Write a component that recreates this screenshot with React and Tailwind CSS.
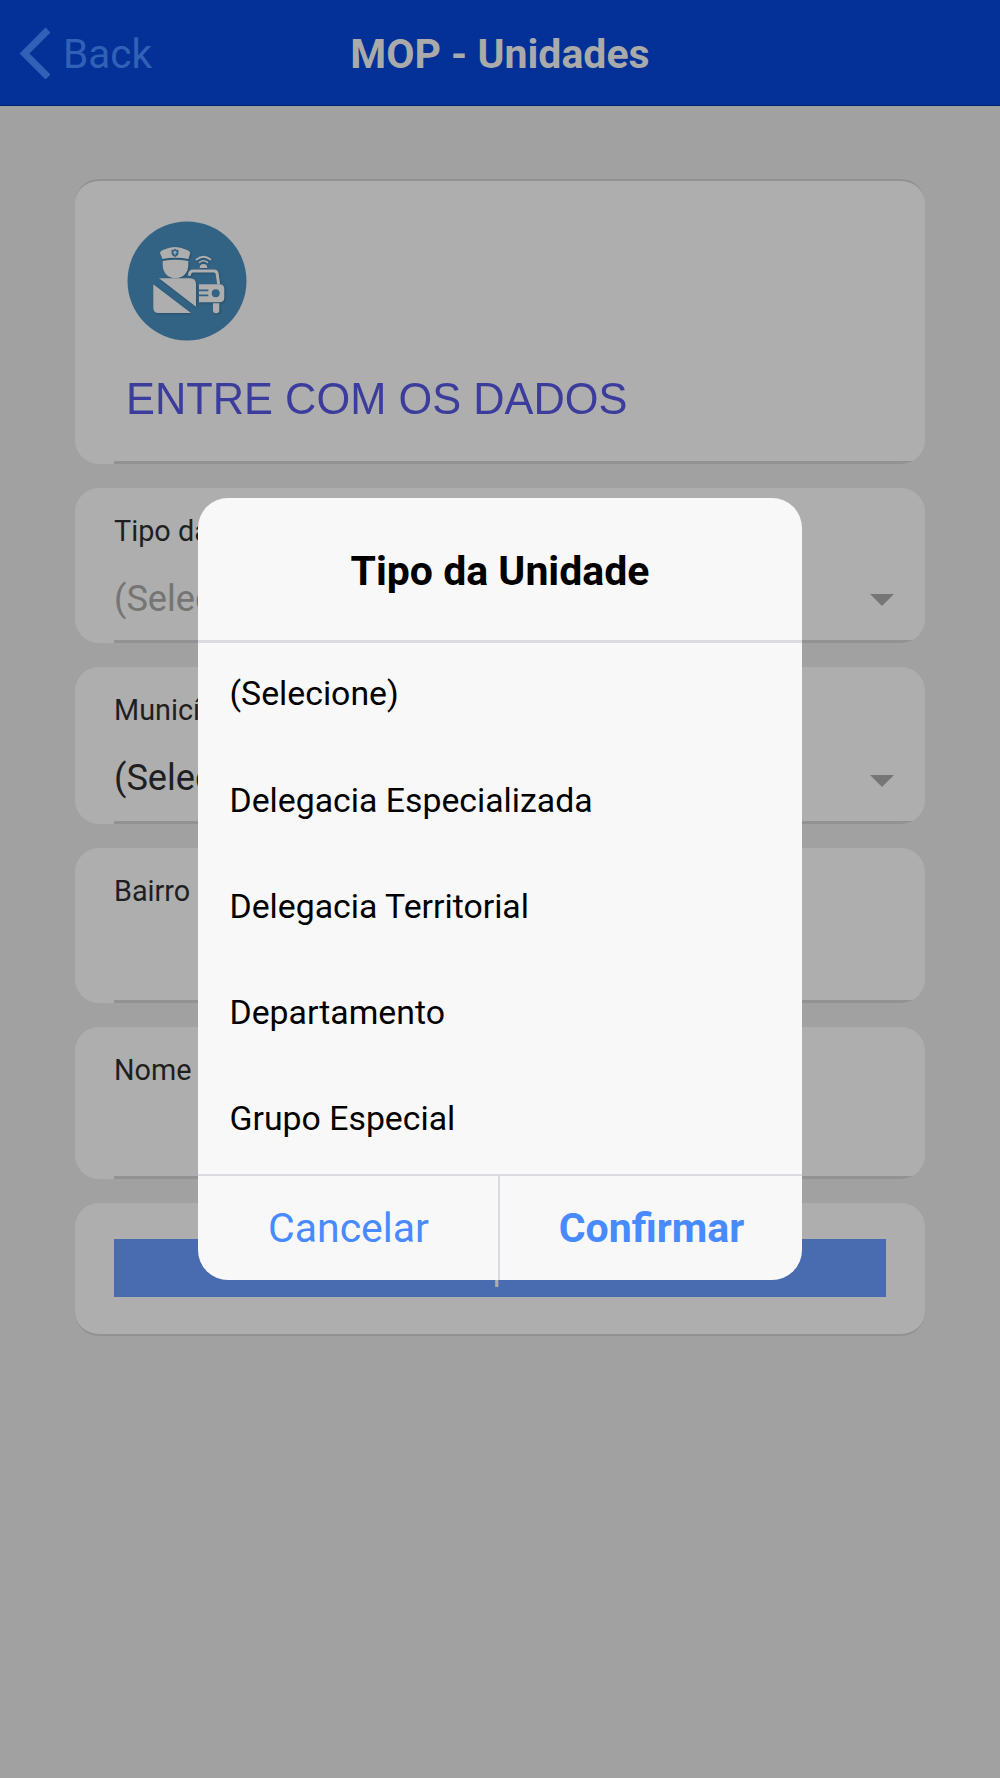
const options = ['(Selecione)', 'Delegacia Especializada', 'Delegacia Territorial', 'Departamento', 'Grupo Especial'];

export default function App() {
  return (
    <main className="relative h-[1778px] w-[1000px] overflow-hidden bg-[#a1a1a1] font-['Roboto',sans-serif] text-[#1f1f1f]">
      <header className="grid h-[106px] grid-cols-[1fr_auto_1fr] items-center border-b border-[#02206b] bg-[#033197] pt-[3px]">
        <button type="button" className="flex items-center gap-[13px] pl-[19px] text-[40.5px] leading-none text-[#3161b7]">
          <BackIcon />
          Back
        </button>
        <h1 className="text-[41px] leading-none font-bold text-[#aaaaaa]">MOP - Unidades</h1>
      </header>

      <section className="flex flex-col gap-6 px-[75px] pt-[73px]">
        <Card className="h-[285px] border-t-2 border-[#919191] px-[52px] pt-10">
          <UnitLogo />
          <h2 className="mt-[30px] -ml-px scale-y-104 text-[43.4px] leading-[54px] whitespace-nowrap text-[#3c3c9c] font-['Liberation_Sans',sans-serif]">ENTRE COM OS DADOS</h2>
        </Card>
        <Card className="h-[155px]">
          <Field label="Tipo da Unidade" value="(Selecione)" muted />
        </Card>
        <Card className="h-[157px]">
          <Field label="Município" value="(Selecione)" />
        </Card>
        <Card className="h-[155px]">
          <Field label="Bairro" />
        </Card>
        <Card className="h-[152px]">
          <Field label="Nome" />
        </Card>
        <div className="h-[133px] rounded-[24px] border-b-2 border-[#919191] bg-[#aeaeae] px-[39px] pt-9">
          <button type="button" className="flex h-[58px] w-full items-center justify-center bg-[#496cb1] pt-[2px] text-[33.8px] text-[#aeaeae]">Pesquisar</button>
        </div>
      </section>

      <Dialog />
    </main>
  );
}

function Card({ className = '', children }) {
  return (
    <div className={`relative overflow-hidden rounded-[24px] bg-[#aeaeae] ${className}`}>
      {children}
      <div className="absolute right-0 bottom-0 left-[39px] h-[3px] bg-[#929292]" />
    </div>
  );
}

function Field({ label, value, muted }) {
  return (
    <div className="px-[39px] pt-[26px]">
      <div className="text-[28.8px] leading-[34px]">{label}</div>
      {value && (
        <div className="mt-[29px] flex items-center justify-between">
          <span className={`text-[36.2px] leading-[44px] ${muted ? 'text-[#757575]' : ''}`}>{value}</span>
          <span className={`-mr-[7.500px] h-0 w-0 border-x-[12px] border-t-[12px] border-x-transparent border-t-[#767676] ${muted ? 'mt-[2px]' : 'mt-[6px]'}`} />
        </div>
      )}
    </div>
  );
}

function Dialog() {
  return (
    <div role="dialog" className="absolute top-[497.500px] left-[198px] flex h-[782.500px] w-[604px] flex-col overflow-hidden rounded-[30px] bg-[#f8f8f8] text-black">
      <div className="flex h-[145.500px] items-center justify-center border-b-[3px] border-[#dbdbe0] pt-[6px] text-[41px] font-bold">Tipo da Unidade</div>
      <ul className="-mt-[1.500px] h-[532.500px] overflow-hidden">
        {options.map((option) => (
          <li key={option} className="flex h-[106.3px] items-center px-[31.500px] text-[33.8px]">{option}</li>
        ))}
      </ul>
      <div className="flex h-[106px] border-t-2 border-[#dbdbdf] text-[41px] text-[#488aff]">
        <button type="button" className="w-[302px] border-r-2 border-[#dbdbdf] pt-px pl-px">Cancelar</button>
        <button type="button" className="w-[302px] pt-px pl-px font-bold">Confirmar</button>
      </div>
    </div>
  );
}

function BackIcon() {
  return (
    <svg className="-mt-[2px] h-[52px] w-[31px]" viewBox="0 0 31 52" fill="none" stroke="currentColor" strokeWidth="7">
      <path d="M29 3 5.500 26.500 29 50" />
    </svg>
  );
}

function UnitLogo() {
  return (
    <svg className="h-[120px] w-[120px]" viewBox="0 0 120 120">
      <circle cx="60" cy="60" r="59.5" fill="#336384" />
      <g fill="#aeaeae" style={{ filter: 'drop-shadow(1px 1.5px 1px #264d68)' }}>
        {/* officer */}
        <path d="M33 32q0-2 3-3 7-3 12-3t12 3q3 1 3.300 3L61.500 38Q48 35.500 35.500 38z" />
        <path d="M35.700 40Q48 37.500 61.300 40v4c0 8-5.500 13.300-12.800 13.300S35.700 52 35.700 44z" />
        <path d="M32 57.300h31q6 0 6 6v22.400z" />
        <path d="M26.300 63.300 64 92H31.500q-5.200 0-5.200-5.200z" />
        {/* car */}
        <path d="M72 63.300h20.500q4.800 0 4.800 4.800v8.400q0 4.800-4.800 4.800H72z" />
        <path d="M86 82.300h6.300v7q0 3-3.150 3T86 89.300z" />
        <path d="M72.700 47q0-4 3.800-4t3.800 4z" />
        <g fill="none" stroke="#aeaeae" strokeLinecap="round">
          <path d="M62.500 53.500q.5-3.500 3.500-3.500h21q2.800 0 3.200 3l1.300 9" strokeWidth="3" />
          <path d="M69.500 38.500q7-5.500 14 0" strokeWidth="1.800" />
          <path d="M72.500 41.300q4-3 8 0" strokeWidth="1.600" />
        </g>
      </g>
      <path d="M44.500 29q2 .2 3.500-1.300 1.500 1.500 3.500 1.300v3q0 2.500-3.500 4-3.500-1.500-3.500-4z" fill="#336384" />
      <path d="M48 29.700v4M46.300 31.300h3.400" stroke="#aeaeae" strokeWidth="1.300" />
      <circle cx="88.700" cy="72.300" r="4" fill="#336384" />
      <path d="M72 69.300h9.300M72 74.300h9.300" stroke="#336384" strokeWidth="1.800" />
    </svg>
  );
}
